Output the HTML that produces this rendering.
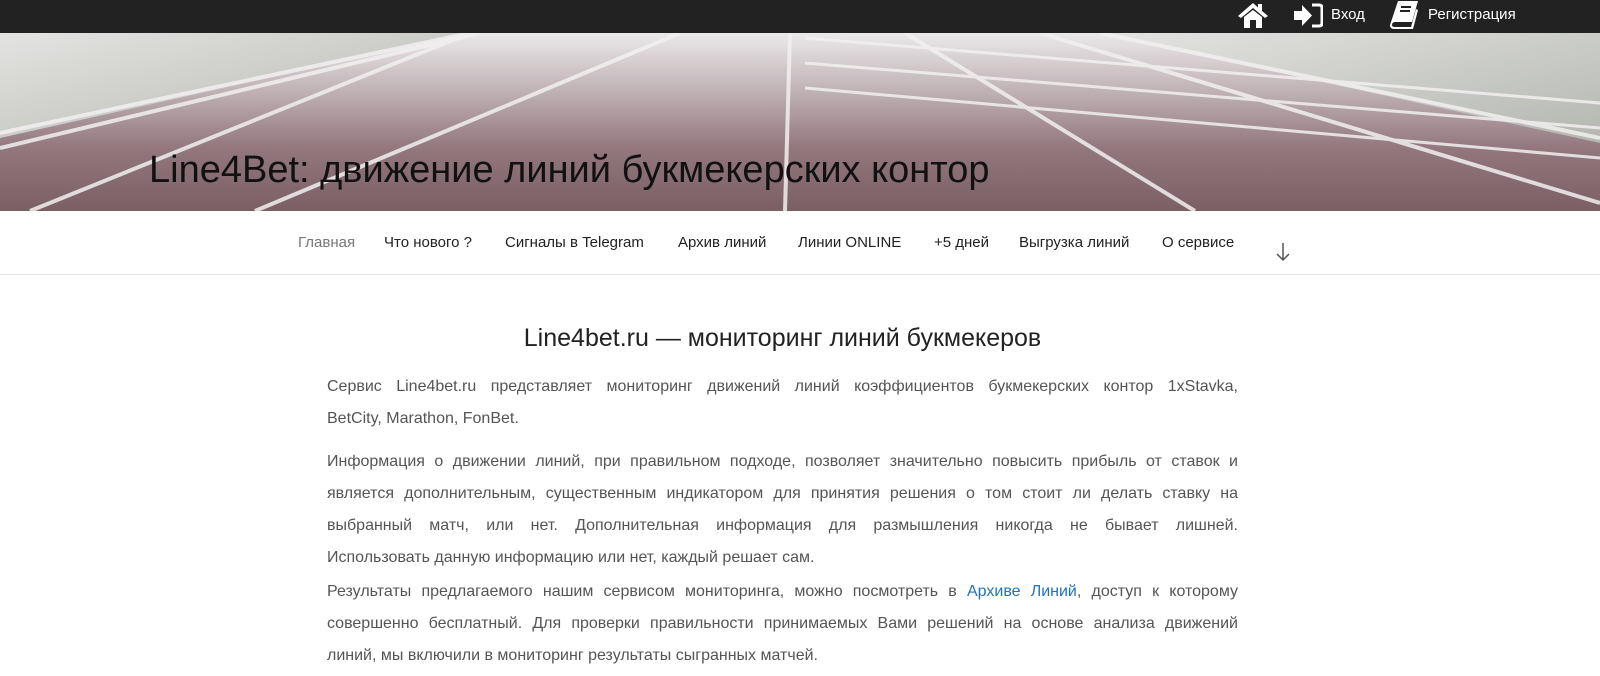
<!DOCTYPE html>
<html><head><meta charset="utf-8"><style>
*{margin:0;padding:0;box-sizing:border-box}
body{width:1600px;height:676px;overflow:hidden;background:#fff;font-family:"Liberation Sans",Arial,sans-serif}
.top{position:absolute;left:0;top:0;width:1600px;height:33px;background:#222;color:#fff;font-size:15px}
.top span{position:absolute;top:6px}
.hdr{position:absolute;left:0;top:33px;width:1600px;height:178px;overflow:hidden}
.title{position:absolute;left:149px;top:116px;font-size:38px;color:#111;white-space:nowrap}
.nav{position:absolute;left:0;top:211px;width:1600px;height:64px;border-bottom:1px solid #e5e5e5}
.nav span{position:absolute;top:23px;font-size:15px;color:#222;white-space:nowrap}
h2{position:absolute;left:0;width:1565px;text-align:center;top:324px;font-weight:normal;font-size:25px;color:#222}
.p{position:absolute;left:327px;width:911px;font-size:16px;color:#555}
.p div{height:32px;line-height:32px;white-space:nowrap;text-align:justify;text-align-last:justify}
.p div.l{text-align-last:left}
a{color:#1e73be;text-decoration:none}
</style></head><body>
<div class="top">
<svg style="position:absolute;left:1237px;top:1px" width="32" height="27" viewBox="0 0 32 27"><path d="M16 2 L1 15 L4 17 L16 7 L28 17 L31 15 L25 10 V3 H21 V6.5 Z" fill="#fff"/><path d="M7 16 L16 9 L25 16 V27 H19 V19 H13 V27 H7 Z" fill="#fff"/></svg>
<svg style="position:absolute;left:1293px;top:3px" width="30" height="25" viewBox="0 0 30 25"><path d="M1 8 H9 V2 L19 12.5 L9 23 V17 H1 Z" fill="#fff"/><path d="M19 2 H26 Q29 2 29 5 V20 Q29 23 26 23 H19" stroke="#fff" stroke-width="3" fill="none"/></svg>
<span style="left:1331px">Вход</span>
<svg style="position:absolute;left:1389px;top:0px" width="30" height="30" viewBox="0 0 30 30"><path d="M9 1 H29 L23 22 H6 Q3 22 3 25 Q3 27 6 27 H22 L27 9 L29 10 L24 29 H5 Q1 29 1 25 Z" fill="#fff"/><path d="M12 7 H22 M11 11 H21" stroke="#222" stroke-width="2"/></svg>
<span style="left:1428px">Регистрация</span>
</div>
<div class="hdr">
<svg width="1600" height="178" viewBox="0 0 1600 178">
<defs><linearGradient id="g" x1="0" y1="0" x2="0" y2="1"><stop offset="0" stop-color="#ebe9ea"/><stop offset=".3" stop-color="#c3b6b9"/><stop offset=".65" stop-color="#92777d"/><stop offset="1" stop-color="#7a5f65"/></linearGradient>
<linearGradient id="gl" x1="0" y1="0" x2="1" y2="1"><stop offset="0" stop-color="#e3e4e1"/><stop offset="1" stop-color="#b4b6b0"/></linearGradient></defs>
<rect width="1600" height="178" fill="url(#g)"/>
<path d="M0 0 H470 L0 105 Z" fill="url(#gl)"/>
<path d="M1100 0 H1600 V110 Z" fill="url(#gl)"/>
<g stroke="#f2f0f0" stroke-width="4" fill="none" opacity=".85">
<path d="M0 100 L470 0"/><path d="M0 115 L480 0"/>
<path d="M30 178 L470 0"/><path d="M255 178 L680 0"/>
<path d="M785 178 L790 0"/><path d="M1195 178 L905 0"/>
<path d="M1600 170 L1040 0"/><path d="M1600 105 L1100 0"/>
<path d="M805 5 L1600 70" stroke-width="3"/><path d="M805 30 L1600 95" stroke-width="3"/><path d="M805 55 L1600 125" stroke-width="3"/>
</g>
</svg>
<div class="title">Line4Bet: движение линий букмекерских контор</div>
</div>
<div class="nav">
<span style="left:298px;color:#777">Главная</span>
<span style="left:384px">Что нового ?</span>
<span style="left:505px">Сигналы в Telegram</span>
<span style="left:678px">Архив линий</span>
<span style="left:798px">Линии ONLINE</span>
<span style="left:934px">+5 дней</span>
<span style="left:1019px">Выгрузка линий</span>
<span style="left:1162px">О сервисе</span>
<svg style="position:absolute;left:1275px;top:31px" width="16" height="20" viewBox="0 0 16 20"><path d="M8 1 V18 M2 12 L8 18 L14 12" stroke="#555" stroke-width="1.5" fill="none"/></svg>
</div>
<h2>Line4bet.ru — мониторинг линий букмекеров</h2>
<div class="p" style="top:371px">
<div>Сервис Line4bet.ru представляет мониторинг движений линий коэффициентов букмекерских контор 1xStavka,</div>
<div class="l">BetCity, Marathon, FonBet.</div>
</div>
<div class="p" style="top:446px">
<div>Информация о движении линий, при правильном подходе, позволяет значительно повысить прибыль от ставок и</div>
<div>является дополнительным, существенным индикатором для принятия решения о том стоит ли делать ставку на</div>
<div>выбранный матч, или нет. Дополнительная информация для размышления никогда не бывает лишней.</div>
<div class="l">Использовать данную информацию или нет, каждый решает сам.</div>
</div>
<div class="p" style="top:576px">
<div>Результаты предлагаемого нашим сервисом мониторинга, можно посмотреть в <a>Архиве Линий</a>, доступ к которому</div>
<div>совершенно бесплатный. Для проверки правильности принимаемых Вами решений на основе анализа движений</div>
<div class="l">линий, мы включили в мониторинг результаты сыгранных матчей.</div>
</div>
</body></html>
